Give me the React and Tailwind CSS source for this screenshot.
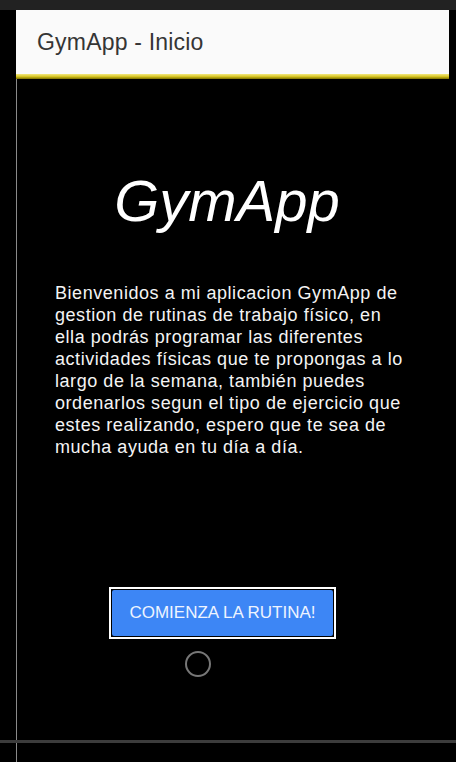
import React from 'react'

const lines = [
  'Bienvenidos a mi aplicacion GymApp de',
  'gestion de rutinas de trabajo físico, en',
  'ella podrás programar las diferentes',
  'actividades físicas que te propongas a lo',
  'largo de la semana, también puedes',
  'ordenarlos segun el tipo de ejercicio que',
  'estes realizando, espero que te sea de',
  'mucha ayuda en tu día a día.',
]

const App = () => {
  return (
    <div className="flex h-[762px] w-[456px] flex-col overflow-hidden bg-black font-['Liberation_Sans',Arial,sans-serif]">
      <div className="h-[10px] shrink-0 bg-[#222]" />

      <div className="flex h-[730px] shrink-0">
        <div className="w-[16px] shrink-0" />
        <div className="flex w-[433px] flex-col">
          <header className="flex h-[64px] shrink-0 items-center bg-[#fafafa] pl-[21px]">
            <h1 className="text-[23px] tracking-[0.2px] text-[#353535]">GymApp - Inicio</h1>
          </header>
          <div className="h-[5px] shrink-0 bg-linear-to-b from-[#f3e97a] via-[#d8c624] to-[#7d7000]" />

          <main className="flex flex-1 flex-col border-l border-[#8a8a8a]">
            <div className="w-[420px] pt-[93px] text-center text-[58px] leading-none italic text-white">
              GymApp
            </div>

            <p className="ml-[38px] mt-[52px] whitespace-nowrap text-[18px] leading-[22px] tracking-[0.55px] text-[#f4f4f4]">
              {lines.map((l, i) => (
                <span key={i} className="block">{l}</span>
              ))}
            </p>

            <div className="ml-[92px] mt-[129px] w-[227px] border-2 border-white bg-black p-px">
              <button className="flex h-[46px] w-full items-center justify-center rounded-[2px] bg-[#3d86f5] text-[17px] text-[#eef4ff]">
                COMIENZA LA RUTINA!
              </button>
            </div>

            <div className="ml-[168px] mt-[12px] h-[26px] w-[26px] rounded-full border-[2.5px] border-[#777]" />
          </main>
        </div>
      </div>

      <div className="h-[3px] shrink-0 bg-[#3c3c3c]" />
      <div className="flex flex-1">
        <div className="w-[16px] shrink-0" />
        <div className="border-l border-[#8a8a8a]" />
      </div>
    </div>
  )
}

export default App
